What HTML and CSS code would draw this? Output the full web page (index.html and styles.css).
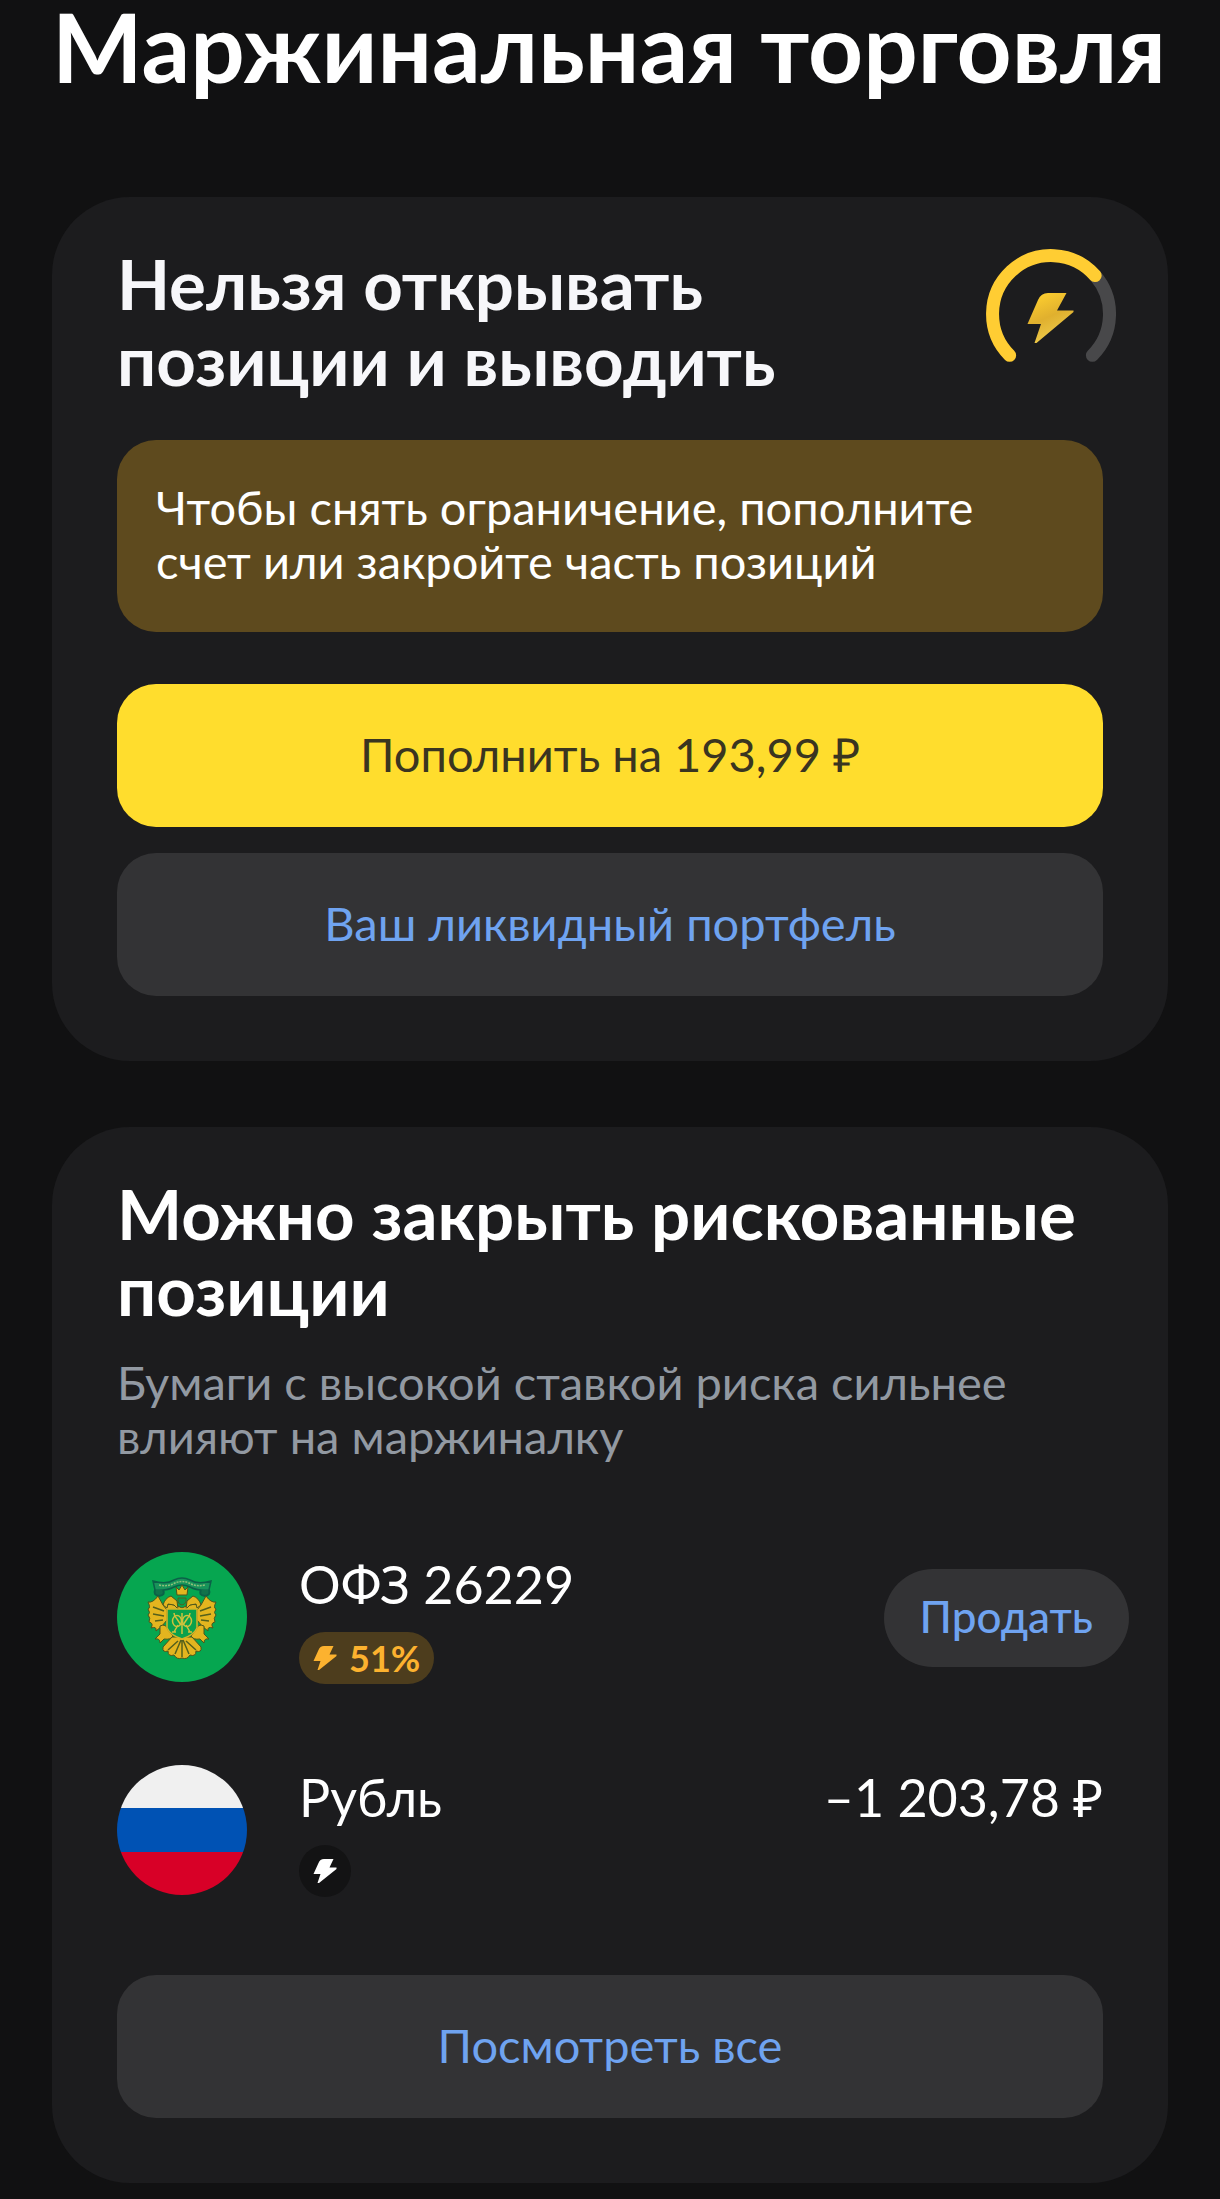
FILE: index.html
```html
<!DOCTYPE html>
<html lang="ru">
<head>
<meta charset="utf-8">
<meta name="viewport" content="width=device-width, initial-scale=1">
<title>Маржинальная торговля</title>
<link rel="stylesheet" href="styles.css">
</head>
<body>
<main class="page">
  <h1 class="page-title">Маржинальная торговля</h1>

  <section class="card">
    <header class="card-head">
      <h2 class="card-title">Нельзя открывать<br>позиции и выводить</h2>
      <svg class="gauge" viewBox="0 0 130 130" aria-hidden="true">
        <defs>
          <linearGradient id="gold" x1="0.2" y1="0" x2="0.6" y2="1">
            <stop offset="0" stop-color="#ffd02f"/>
            <stop offset="0.5" stop-color="#e0b02e"/>
            <stop offset="1" stop-color="#f0cf50"/>
          </linearGradient>
        </defs>
        <path d="M109.150 26.620A58.500 58.500 0 0 1 106.370 106.370" fill="none" stroke="#48484a" stroke-width="13" stroke-linecap="round"/>
        <path d="M23.630 106.370A58.500 58.500 0 1 1 109.150 26.620" fill="none" stroke="#ffcd33" stroke-width="13" stroke-linecap="round"/>
        <path d="M62 44H80.500L71 61.500H87.500V63L50.500 94H48.500L55 75H41.500L52 51Q55 44 62 44Z" fill="url(#gold)"/>
      </svg>
    </header>
    <p class="notice">Чтобы снять ограничение, пополните счет или закройте часть позиций</p>
    <div class="actions">
      <button class="button button-primary" type="button">Пополнить на 193,99 ₽</button>
      <button class="button" type="button">Ваш ликвидный портфель</button>
    </div>
  </section>

  <section class="card">
    <h2 class="card-title">Можно закрыть рискованные позиции</h2>
    <p class="card-text">Бумаги с высокой ставкой риска сильнее влияют на маржиналку</p>
    <ul class="positions">
      <li class="position">
        <svg class="avatar" viewBox="0 0 130 130" aria-hidden="true">
          <circle cx="65" cy="65" r="65" fill="#06a650"/>
          <path d="M36 29Q49 33 57 28Q65 24 73 28Q81 33 94 29L92 38Q80 39 73 35Q65 31 57 35Q50 39 38 38Z" fill="#18935a" stroke="#0b6148" stroke-width="1.500"/>
          <path d="M42 33Q51 35 58 31Q65 28 72 31Q79 35 88 33" fill="none" stroke="#8fc07a" stroke-width="1.500" stroke-dasharray="2 1"/>
          <path d="M38 38Q36 43 42 44Q49 43 46 38M92 38Q94 43 88 44Q81 43 84 38" fill="#11724b" stroke="#0b6148" stroke-width="2"/>
          <g fill="#e3b51f" stroke="#4d551c" stroke-width="1">
            <path d="M59 35L62 38L65 33L68 38L71 35L70 43H60Z"/>
            <path d="M44 54Q55 50 65 56Q75 50 86 54L84 62H46Z"/>
            <path d="M57 53L51 52L50 56L46 53Q48 46 54 44L60 49L61 57ZM73 53L79 52L80 56L84 53Q82 46 76 44L70 49L69 57Z"/>
            <path d="M41 44Q36 51 31 50Q34 56 31 57Q34 61 31 63Q34 66 32 70Q37 71 34 76Q40 74 39 79Q45 75 50 68L50 58L46 53Z"/>
            <path d="M89 44Q94 51 99 50Q96 56 99 57Q96 61 99 63Q96 66 98 70Q93 71 96 76Q90 74 91 79Q85 75 80 68L80 58L84 53Z"/>
            <path d="M43 74Q49 71 51 78L56 84Q54 88 47 87L43 91Q43 86 38 87L43 82ZM87 74Q81 71 79 78L74 84Q76 88 83 87L87 91Q87 86 92 87L87 82Z"/>
            <path d="M55 85L46 95Q45 101 51 99Q51 105 57 103Q60 108 65 106Q70 108 73 103Q79 105 79 99Q85 101 84 95L75 85Z"/>
          </g>
          <path d="M61 89L51 98M64 88L58 102M65 88V105M66 88L72 102M69 89L79 98M36 55L47 59M36 62L47 64M38 69L46 68M94 55L83 59M94 62L83 64M92 69L84 68" fill="none" stroke="#54601c" stroke-width="1.500"/>
          <path d="M50 57H80V76Q77 83 65 87Q53 83 50 76Z" fill="#0aa14c" stroke="#d7b328" stroke-width="1.500"/>
          <path d="M61 46H69V50Q65 56 61 50Z" fill="#0c9a4c" stroke="#52601c"/>
          <g fill="none" stroke="#cfc23c" stroke-width="1.500">
            <ellipse cx="60" cy="69" rx="4.500" ry="5.500"/>
            <ellipse cx="70" cy="69" rx="4.500" ry="5.500"/>
            <path d="M65 61V82M57 61Q57 64 60 67L64 73M73 61Q73 64 70 67L66 73M61 73L57 80M69 73L73 80M55 80H59M71 80H75"/>
          </g>
        </svg>
        <div class="position-info">
          <span class="position-name">ОФЗ 26229</span>
          <span class="badge badge-risk">
            <svg class="bolt" viewBox="0 0 24 26" aria-hidden="true"><path d="M11 1H20.500L16.500 9.500H23.500V11L6 25H4.500L7.500 16H0.500L5.500 5Q7 1 11 1Z" fill="currentColor"/></svg>51%
          </span>
        </div>
        <button class="sell" type="button">Продать</button>
      </li>
      <li class="position">
        <svg class="avatar avatar-flag" viewBox="0 0 130 130" aria-hidden="true">
          <path d="M0 0H130V43H0Z" fill="#f0f0f0"/>
          <path d="M0 43H130V87H0Z" fill="#0052b4"/>
          <path d="M0 87H130V130H0Z" fill="#d80027"/>
        </svg>
        <div class="position-info">
          <span class="position-name">Рубль</span>
          <span class="badge badge-plain">
            <svg class="bolt" viewBox="0 0 24 26" aria-hidden="true"><path d="M11 1H20.500L16.500 9.500H23.500V11L6 25H4.500L7.500 16H0.500L5.500 5Q7 1 11 1Z" fill="currentColor"/></svg>
          </span>
        </div>
        <span class="position-amount">–1 203,78&#8239;₽</span>
      </li>
    </ul>
    <button class="button" type="button">Посмотреть все</button>
  </section>
</main>
</body>
</html>
```
FILE: styles.css
```css
* {
  box-sizing: border-box;
}

body {
  margin: 0;
  background: #111112;
  color: #fff;
  font-family: Lato, "Open Sans", sans-serif;
  font-size: 47px;
  line-height: 54px;
}

h1, h2, p, ul {
  margin: 0;
  padding: 0;
}

button {
  border: 0;
  font: inherit;
  cursor: pointer;
}

.page {
  display: flex;
  flex-direction: column;
  gap: 66px;
  padding: 0 52px 16px;
}

.page-title {
  padding-bottom: 39px;
  font-size: 96px;
  font-weight: 700;
  line-height: 92px;
}

.card {
  padding: 49px 65px 65px;
  border-radius: 78px;
  background: #1c1c1e;
}

.card-head {
  display: flex;
  justify-content: space-between;
}

.card-title {
  font-size: 69px;
  font-weight: 700;
  line-height: 76px;
}

.card-head .card-title {
  color: #f7f7fa;
}

.gauge {
  flex: none;
  width: 130px;
  height: 130px;
  margin: 3px -13px 0 0;
}

.notice {
  margin-top: 42px;
  padding: 40px 39px 44px;
  border-radius: 39px;
  background: #5e4a1e;
}

.actions {
  display: flex;
  flex-direction: column;
  gap: 26px;
  margin-top: 52px;
}

.button {
  width: 100%;
  padding: 43px 39px 46px;
  border-radius: 39px;
  background: #333335;
  color: #6fa3f0;
}

.button-primary {
  background: #ffdd2d;
  color: #3a3520;
}

.card-text {
  margin-top: 27px;
  color: #9299a2;
}

.positions {
  display: flex;
  flex-direction: column;
  gap: 81px;
  margin: 89px 0 78px;
  list-style: none;
}

.position {
  display: flex;
  align-items: flex-start;
  gap: 52px;
}

.avatar {
  flex: none;
  width: 130px;
  height: 130px;
}

.avatar-flag {
  border-radius: 50%;
}

.position-info {
  display: flex;
  flex: 1;
  flex-direction: column;
  align-items: flex-start;
  gap: 16px;
}

.position-name,
.position-amount {
  font-size: 52px;
  line-height: 64px;
}

.badge {
  display: flex;
  align-items: center;
  gap: 12px;
  height: 52px;
  padding: 0 14px;
  border-radius: 26px;
  font-size: 36px;
  font-weight: 700;
}

.badge-risk {
  background: #4d3d1d;
  color: #fcb22f;
}

.badge-plain {
  background: #131314;
}

.bolt {
  width: 24px;
  height: 26px;
}

.sell {
  align-self: center;
  margin-right: -26px;
  padding: 20px 36px 24px;
  border-radius: 49px;
  background: #333335;
  color: #6fa3f0;
  font-size: 44px;
  font-weight: 500;
}
```
